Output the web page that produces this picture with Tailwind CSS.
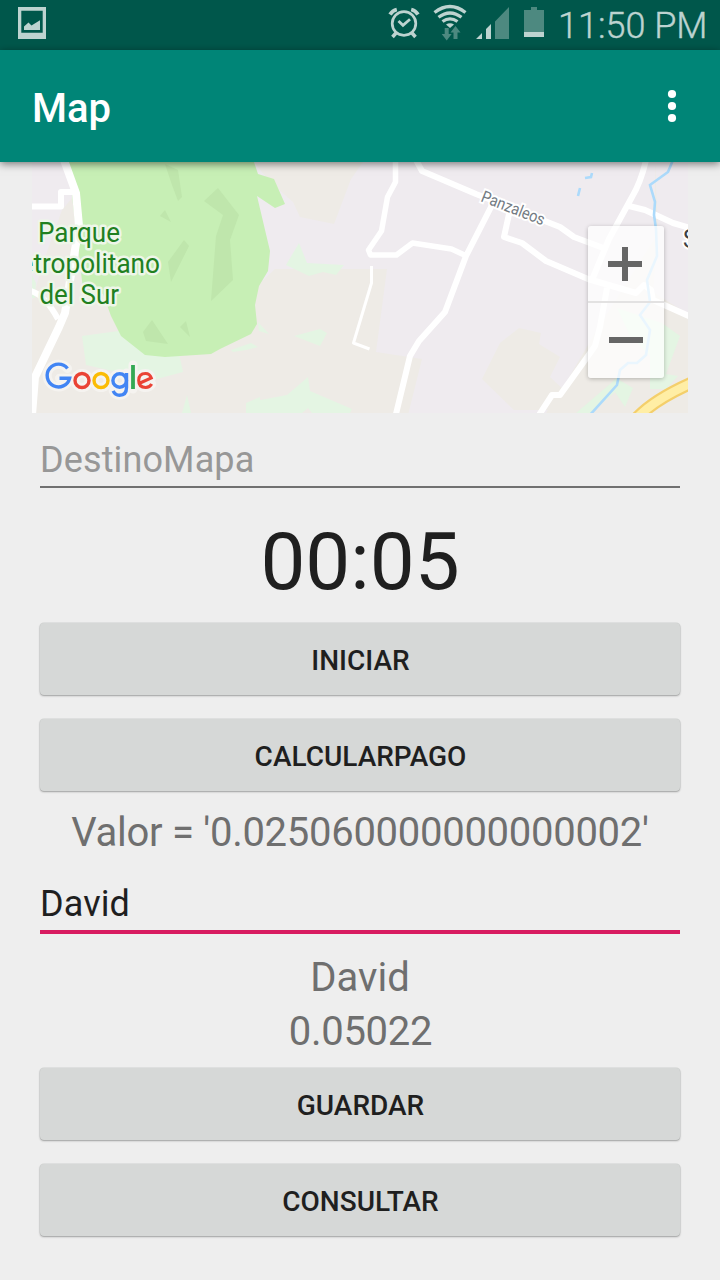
<!DOCTYPE html>
<html lang="es">
<head>
<meta charset="utf-8">
<title>Map</title>
<script src="https://cdn.jsdelivr.net/npm/@tailwindcss/browser@4"></script>
</head>
<body class="w-[720px] h-[1280px] overflow-hidden bg-[#eeeeee] font-['Roboto',sans-serif] text-[#1f1f1f] flex flex-col">
  <!-- Status bar -->
  <div class="h-[50px] shrink-0 bg-[#00574b] flex items-center justify-between">
    <svg class="w-[60px] h-[50px]" viewBox="0 0 60 50">
      <path fill="#bdd3d0" fill-rule="evenodd" d="M18 7h28v32H18zM21.3 10.7v22h21.4v-22z"/>
      <path fill="#bdd3d0" d="M24 30v-3.5l4.500-4 3 3 8.500-5.200V30z"/>
    </svg>
    <div class="flex items-center">
      <svg class="w-[172px] h-[50px]" viewBox="380 0 172 50">
        <g fill="none" stroke="#bdd3d0">
          <circle cx="404" cy="23.500" r="11.800" stroke-width="2.700"/>
          <path stroke-width="2.800" d="M398.500 21l4.500 4.300 7-6"/>
          <path stroke-width="3.800" d="M390 14.500q2.500-4 6.800-5M418 14.500q-2.500-4-6.800-5"/>
          <path stroke-width="3.500" d="M396 33l-3.500 4M412 33l3.500 4"/>
          <path stroke-width="3.300" d="M434.500 12.500q15.500-12 31 0M438.500 17.300q11.500-8.600 23 0M442.500 21.500q7.500-5.300 15 0"/>
        </g>
        <path fill="#bdd3d0" d="M446 24.500q4-2.500 8 0l-4 3.500z"/>
        <path fill="#4d8980" d="M444.700 28h4v6h3l-5 6.500-5-6.500h3zM453.500 39h4v-6.500h3l-5-6.500-5 6.500h3z"/>
        <path fill="#bdd3d0" d="M476 39l6-6v6zM486 39V29l5-5v15z"/>
        <path fill="#4d8980" d="M495 39V21.500L509 7v32zM524 10h7V7h6v3h7v22h-20z"/>
        <path fill="#bdd3d0" d="M524 32h20v5h-20z"/>
      </svg>
      <div class="w-[168px] pl-[6px] pt-[2px] text-[36px] leading-[48px] font-light text-[#bdd3d0] whitespace-nowrap [-webkit-text-stroke:0.4px_#bdd3d0]">11:50 PM</div>
    </div>
  </div>

  <!-- App bar -->
  <div class="relative z-10 h-28 shrink-0 bg-[#008577] shadow-[0_2px_8px_rgba(0,0,0,0.5)] flex items-center justify-between pl-8 pr-[43px]">
    <div class="text-[40px] leading-[56px] pt-[6px] font-medium text-white">Map</div>
    <svg class="w-[10px] h-[36px]" viewBox="0 0 10 36" fill="#fff"><circle cx="5" cy="6" r="4.100"/><circle cx="5" cy="18" r="4.100"/><circle cx="5" cy="30" r="4.100"/></svg>
  </div>

  <!-- Map -->
  <div class="relative mx-8 h-[251px] shrink-0">
    <svg class="block w-[656px] h-[251px]" viewBox="32 162 656 251">
      <rect x="32" y="162" width="656" height="251" fill="#efebef"/>
      <g fill="#eeebe6">
        <path d="M254 162h109l-12 17-17 45-34-7-7-15-23-20zM32 300l12-40 18-50 10-12 15 100 170-12 18-17h112l-11 83 46 7-17 68-3 11H32z"/>
        <path d="M519 328l22 5-2 11 21 13-10 20 14 13h34l-2 20h-82l-32-31 18-36z"/>
        <path d="M655 162l3 70-5 60 35 22v99H546l14-20 35-60 60-95z"/>
      </g>
      <g fill="#e4f5e3">
        <path d="M82 336l51-7 45 20 5 23-30 8-67-15zM182 413l5-18 4 18zM231 350l20-7 7 4-12 3-13 2zM246 413l4-11 37-7 21-18 2 14 42 18-2 4h-38l-4-5-6 5zM286 265l13-22 8 20 37 2-8 10-13-3-14 4zM294 336l26-7 7 4-7 13zM258 322l11 12-10-3zM246 403l14-6v16h-14z"/>
        <path d="M617 308l45 15 18 13-14 38 12 2-12 13h-16v-33l-20-20zM576 413l34-29 6-6 17 10-8 19-10-15-24 21z"/>
        <path d="M32 275l4 8-1 15h-3z"/>
      </g>
      <path fill="#c7efb5" d="M68 162h186l4 12 16 5 11 25-10 4-18-12 13 55-2 20-9 15-4 19 2 19-6 10-31 15-9 5-46 3-20-2-24-19-10-20-8-22-20-5z"/>
      <path fill="#bfe6ac" d="M165 164l13 6 4 27-4 4-6-16zM218 188l21 27-9 25 3 40-22 21 5-65 7-21-19-14zM160 216l5-6 6 12zM168 262l16-22 5 6-18 36zM143 332l9-12 16 24-22-3zM180 327l6-6 4 16z"/>
      <g fill="none" stroke="#fff" stroke-width="6" stroke-linejoin="round">
        <path stroke-width="8" d="M64 160l12 33 3 33-7 42-7 45-6 14-24 50-3 38"/>
        <path d="M31 206.500h30V192h14M31 291q14 4 27 28"/>
        <path stroke-width="5.500" d="M395.500 160v22l-8 15-6 34-13 19 2 5h26l16-12 39 6 15 7"/>
        <path d="M416 160l6 11 54 23 84 33 14 10 32 12M492 205l-26 51-21 56-26 29-9 15-14 58M646 160q-5 22-14 37l-23 42-17 41M511 205l-7 32 18 6 24 18 42 18 48 14 8-8 7 5 2 10 38 17M629 206l16 4 28 13 17 5M607 288l-7 39-5 19q-14 20-35 49h-8l-13 20"/>
        <path stroke-width="3" d="M371.500 266v17l-18 60 16 6"/>
      </g>
      <g fill="none" stroke="#acdafb" stroke-width="2.600">
        <path d="M673 160l-5 12-18 13 5 17-1 13 2 14 1 27-10 24 3 22-10 13 10 15-4 25-9 8h-9l-8 7-3 15-28 31"/>
        <path d="M585 178l6-1 1-4M578 196l2-8"/>
      </g>
      <path d="M636 419q18-20 60-38" fill="none" stroke="#f4cf6b" stroke-width="13"/>
      <path d="M636 419q18-20 60-38" fill="none" stroke="#ffeea5" stroke-width="8.500"/>
      <g font-family="Roboto, sans-serif">
        <g font-size="27" fill="#21801f" stroke="#eef6e9" stroke-width="5" stroke-linejoin="round" paint-order="stroke">
          <text x="38" y="242" textLength="82" lengthAdjust="spacingAndGlyphs">Parque</text>
          <text x="19.500" y="273" textLength="140.500" lengthAdjust="spacingAndGlyphs">etropolitano</text>
          <text x="39.500" y="304" textLength="79.500" lengthAdjust="spacingAndGlyphs">del Sur</text>
        </g>
        <text x="0" y="0" transform="translate(480 201) rotate(21.500)" font-size="16.500" textLength="67" lengthAdjust="spacingAndGlyphs" fill="#737b83" stroke="#fff" stroke-width="4" paint-order="stroke">Panzaleos</text>
        <text x="683" y="248" font-size="26" fill="#3c4043" stroke="#fff" stroke-width="4" paint-order="stroke" textLength="14" lengthAdjust="spacingAndGlyphs">S</text>
      </g>
      <!-- Google wordmark -->
      <defs>
        <g id="mark">
          <path d="M67.500 368.500A11.400 11.400 0 1 0 69.600 378.300H59.500"/>
          <circle cx="82" cy="380.500" r="7"/>
          <circle cx="101" cy="380.500" r="7"/>
          <path d="M126.500 373v14.500q0 7.700-7 7.700-4.500 0-6.300-4.400"/>
          <circle cx="119.700" cy="380.500" r="6.800"/>
          <path d="M133 365v24M139 383.500l12.300-5.500q-1.500-4.500-5.800-4.500-6.800 0-6.800 7t7 7q4 0 6-3.500"/>
        </g>
      </defs>
      <use href="#mark" fill="none" stroke="#f5f3f0" stroke-width="9" stroke-linejoin="round" stroke-linecap="round"/>
      <g fill="none" stroke-width="3.400">
        <path stroke="#4285f4" d="M67.500 368.500A11.400 11.400 0 1 0 69.600 378.300H59.500"/>
        <circle cx="82" cy="380.500" r="7" stroke="#ea4335"/>
        <circle cx="101" cy="380.500" r="7" stroke="#fbbc05"/>
        <path stroke="#4285f4" d="M126.500 373v14.500q0 7.700-7 7.700-4.500 0-6.300-4.400"/>
        <circle cx="119.700" cy="380.500" r="6.800" stroke="#4285f4"/>
        <path stroke="#34a853" stroke-width="3.800" d="M133 365v24"/>
        <path stroke="#ea4335" stroke-width="3.100" d="M139 383.500l12.300-5.500q-1.500-4.500-5.800-4.500-6.800 0-6.800 7t7 7q4 0 6-3.500"/>
      </g>
    </svg>
    <!-- Zoom controls -->
    <div class="absolute left-[556px] top-[64px] w-[76px] h-[152px] rounded-[3px] bg-white/75 shadow-[0_1px_4px_rgba(0,0,0,0.25)] flex flex-col">
      <svg class="w-[76px] h-[76px]" viewBox="0 0 76 76"><path fill="#666" d="M20 35h14V21h6v14h14v6H40v14h-6V41H20z"/></svg>
      <div class="h-0 border-t-2 border-[#e3e2e2] -mt-px -mb-px"></div>
      <svg class="w-[76px] h-[76px]" viewBox="0 0 76 76"><path fill="#666" d="M21 35h34v6H21z"/></svg>
    </div>
  </div>

  <!-- Form -->
  <div class="px-10 flex flex-col text-center">
    <div class="mt-5 h-[55px] border-b-2 border-[#707070] text-left text-[36px] leading-[55px] tracking-[0.12px] text-[#979797]">DestinoMapa</div>
    <div class="mt-3 h-[123px] text-[80px] leading-[125px]">00:05</div>
    <button class="h-[72px] rounded-[4px] bg-[#d6d8d7] shadow-[0_1px_2px_rgba(0,0,0,0.3),0_0_0_0.5px_#d6d8d7] pt-[3px] pl-px text-[28px] font-medium">INICIAR</button>
    <button class="mt-6 h-[72px] rounded-[4px] bg-[#d6d8d7] shadow-[0_1px_2px_rgba(0,0,0,0.3),0_0_0_0.5px_#d6d8d7] pt-[3px] pl-px text-[28px] font-medium">CALCULARPAGO</button>
    <div class="h-[84px] text-[40px] leading-[84px] tracking-[-0.28px] text-[#6f6f6f] whitespace-nowrap">Valor = '0.025060000000000002'</div>
    <div class="mt-1 h-[55px] border-b-4 border-[#d81b60] text-left text-[36px] leading-[51px] tracking-[0.12px]">David</div>
    <div class="mt-[17px] h-[54px] text-[40px] leading-[54px] text-[#6f6f6f]">David</div>
    <div class="h-[54px] pl-px text-[40px] leading-[54px] tracking-[-0.28px] text-[#6f6f6f]">0.05022</div>
    <button class="mt-[9px] h-[72px] rounded-[4px] bg-[#d6d8d7] shadow-[0_1px_2px_rgba(0,0,0,0.3),0_0_0_0.5px_#d6d8d7] pt-[3px] pl-px text-[28px] font-medium">GUARDAR</button>
    <button class="mt-6 h-[72px] rounded-[4px] bg-[#d6d8d7] shadow-[0_1px_2px_rgba(0,0,0,0.3),0_0_0_0.5px_#d6d8d7] pt-[3px] pl-px text-[28px] font-medium">CONSULTAR</button>
  </div>
</body>
</html>
